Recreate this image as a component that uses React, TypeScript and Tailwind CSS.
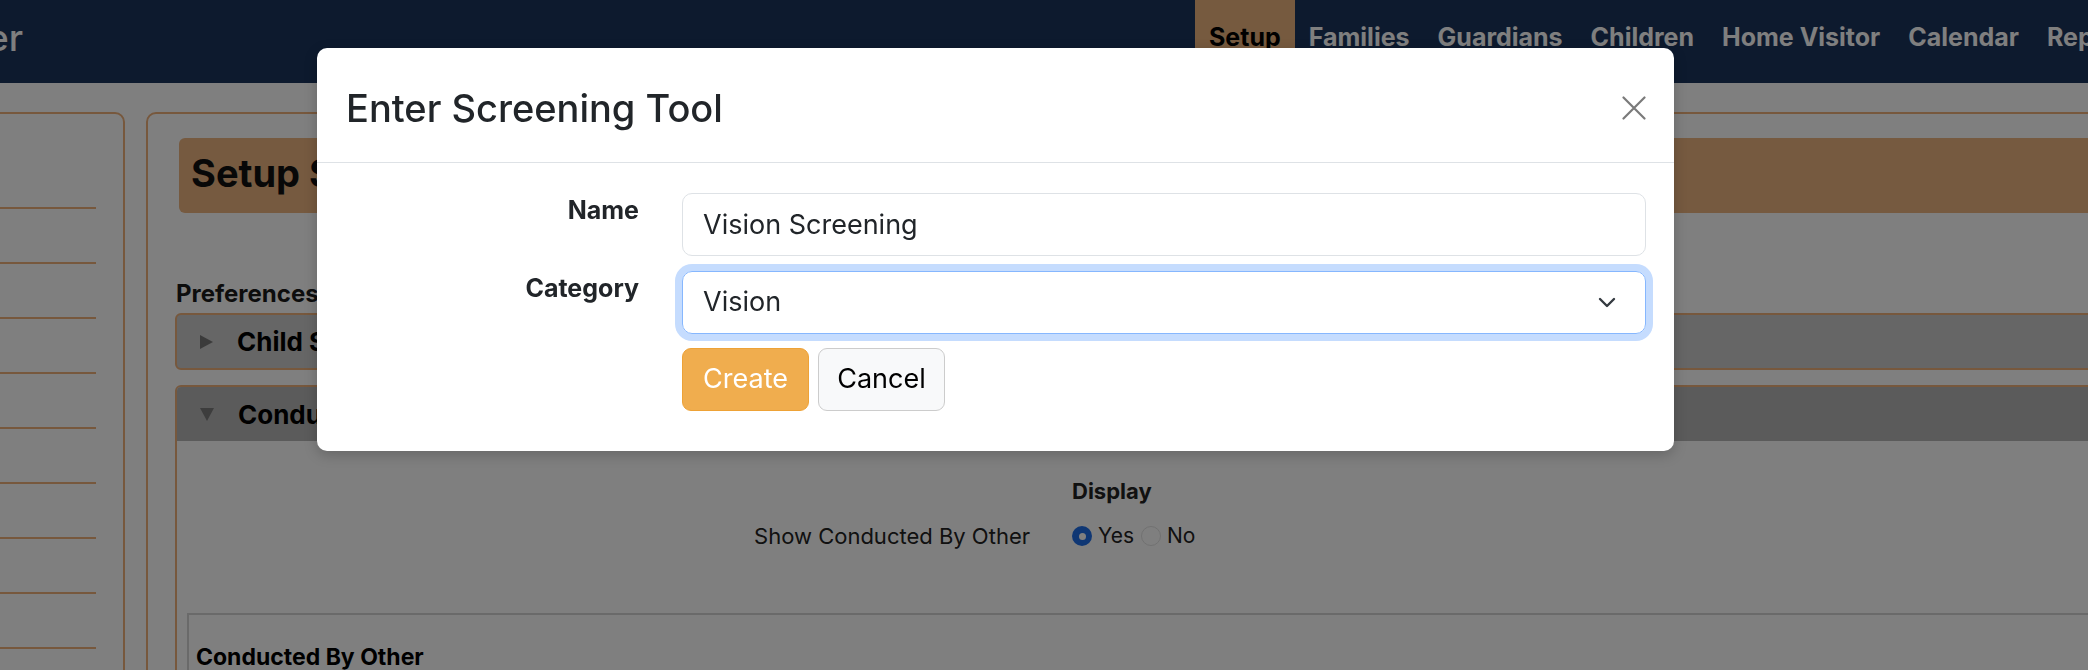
import { useState } from "react";

const navItems = ["Setup", "Families", "Guardians", "Children", "Home Visitor", "Calendar", "Reports"];

const Chevron = () => (
  <svg width="18" height="11" viewBox="0 0 18 11" fill="none">
    <path d="M2 2l7 7 7-7" stroke="#343a40" strokeWidth="2.4" strokeLinecap="round" strokeLinejoin="round" />
  </svg>
);

const CloseIcon = () => (
  <svg width="24" height="24" viewBox="0 0 24 24" fill="none">
    <path d="M1.5 1.5l21 21M22.5 1.5l-21 21" stroke="#7a7a7a" strokeWidth="2.2" strokeLinecap="round" />
  </svg>
);

const Radio = ({ checked }: { checked: boolean }) =>
  checked ? (
    <span className="w-[20px] h-[20px] rounded-full bg-[#1f6ee8] flex items-center justify-center">
      <span className="w-[7px] h-[7px] rounded-full bg-white" />
    </span>
  ) : (
    <span className="w-[20px] h-[20px] rounded-full bg-white border border-[#e2e2e2]" />
  );

const App = () => {
  const [name, setName] = useState("Vision Screening");
  const [category, setCategory] = useState("Vision");

  return (
    <div className="relative w-[2088px] h-[670px] overflow-hidden bg-white font-[Inter,'Noto_Sans',sans-serif] text-[#212529]">
      {/* navbar */}
      <div className="h-[83px] bg-[#1b345c] flex">
        <div className="w-[1195px] shrink-0 pt-[16px] overflow-hidden">
          <span className="block -ml-[13px] text-[37px] leading-[44px] font-medium text-white">er</span>
        </div>
        {navItems.map(item => (
          <div
            key={item}
            className={`h-full px-[14px] pt-[21px] text-[25px] leading-[32px] font-bold whitespace-nowrap ${
              item === "Setup" ? "bg-[#ecb47f] text-black" : "text-white"
            }`}
          >
            {item}
          </div>
        ))}
      </div>

      {/* page body */}
      <div className="flex pt-[29px]">
        <div className="-ml-[75px] w-[200px] shrink-0 h-[700px] border-2 border-[#eeb07a] rounded-[10px] pt-[40px] px-[27px]">
          {Array.from({ length: 10 }).map((_, i) => (
            <div key={i} className="h-[55px] border-b-2 border-[#eeb07a]" />
          ))}
        </div>

        <div className="ml-[21px] w-[2000px] shrink-0 h-[700px] border-2 border-[#eeb07a] rounded-[10px] pt-[24px]">
          <div className="ml-[31px] h-[75px] bg-[#ecb480] rounded-[6px] pl-[12px] pt-[12px]">
            <h1 className="text-[38px] leading-[46px] font-bold text-[#111]">Setup Screening Tools</h1>
          </div>

          <div className="ml-[27px] mt-[65px]">
            <div className="pl-[1px] text-[24px] leading-[32px] font-bold text-[#1a1a1a]">Preferences</div>

            <div className="mt-[3px] h-[57px] bg-[#cccccc] border-2 border-[#eeb07a] rounded-[6px] flex items-center pl-[23px]">
              <span className="w-0 h-0 border-y-[7px] border-y-transparent border-l-[13px] border-l-[#777]" />
              <span className="ml-[24px] text-[26px] font-bold text-black">Child Screening Tools</span>
            </div>

            <div className="mt-[15px] border-2 border-[#eeb07a] rounded-[6px] h-[400px]">
              <div className="h-[54px] bg-[#b7b7b7] flex items-center pl-[23px] rounded-t-[4px]">
                <span className="w-0 h-0 border-x-[7px] border-x-transparent border-t-[13px] border-t-[#7a7a7a]" />
                <span className="ml-[24px] text-[26px] font-bold text-black">Conducted By Other</span>
              </div>

              <div className="pt-[35px] pl-[10px]">
                <div className="flex gap-[42px]">
                  <div className="w-[843px]" />
                  <div className="text-[22px] leading-[30px] font-bold text-[#222]">Display</div>
                </div>
                <div className="mt-[15px] flex items-center gap-[42px]">
                  <div className="w-[843px] text-right text-[22px] leading-[30px] text-[#222]">Show Conducted By Other</div>
                  <div className="flex items-center text-[21px] leading-[30px] text-[#222]">
                    <Radio checked />
                    <span className="ml-[6px]">Yes</span>
                    <span className="ml-[7px] flex">
                      <Radio checked={false} />
                    </span>
                    <span className="ml-[6px]">No</span>
                  </div>
                </div>

                <div className="mt-[62px] border-2 border-[#d4d4d4] h-[200px] pl-[7px] pt-[27px]">
                  <div className="text-[23px] leading-[30px] font-bold text-black">Conducted By Other</div>
                </div>
              </div>
            </div>
          </div>
        </div>
      </div>

      {/* backdrop */}
      <div className="fixed inset-0 bg-black/50" />

      {/* modal */}
      <div className="absolute left-[317px] top-[48px] w-[1357px] h-[403px] bg-white rounded-[10px] shadow-[0_4px_14px_rgba(0,0,0,0.2)] z-10">
        <div className="h-[115px] px-[28px] pt-[6px] flex items-center justify-between border-b-[1.5px] border-[#dee2e6]">
          <h2 className="text-[38px] leading-[48px] font-medium text-[#212529] pl-[1px]">Enter Screening Tool</h2>
          <button type="button" className="w-[24px] h-[24px] flex items-center justify-center">
            <CloseIcon />
          </button>
        </div>

        <form className="pt-[30px] px-[28px] pb-[41px]" onSubmit={e => e.preventDefault()}>
          <div className="flex items-start gap-[43px]">
            <label className="w-[294px] shrink-0 text-right text-[25px] leading-[34px] font-bold text-[#212529]">Name</label>
            <input
              value={name}
              onChange={e => setName(e.target.value)}
              className="flex-1 h-[63px] px-[20px] border-[1.5px] border-[#dee2e6] rounded-[10px] text-[27px] text-[#212529] outline-none"
            />
          </div>

          <div className="mt-[15px] flex items-start gap-[43px]">
            <label className="w-[294px] shrink-0 text-right text-[25px] leading-[34px] font-bold text-[#212529]">Category</label>
            <div className="relative flex-1 h-[63px] border-[1.5px] border-[#86b7fe] rounded-[10px] shadow-[0_0_0_7px_#c5dcfe] flex items-center pl-[20px] pr-[29px]">
              <select
                value={category}
                onChange={e => setCategory(e.target.value)}
                className="flex-1 appearance-none bg-transparent text-[27px] text-[#212529] outline-none"
              >
                <option>Vision</option>
                <option>Hearing</option>
                <option>Development</option>
              </select>
              <Chevron />
            </div>
          </div>

          <div className="mt-[14px] ml-[337px] flex gap-[9px]">
            <button type="submit" className="w-[127px] h-[63px] bg-[#f0ad4e] border-[1.5px] border-[#eea236] rounded-[9px] text-white text-[27px]">
              Create
            </button>
            <button type="button" className="w-[127px] h-[63px] bg-[#f8f9fa] border-[1.5px] border-[#cccccc] rounded-[9px] text-black text-[27px]">
              Cancel
            </button>
          </div>
        </form>
      </div>
    </div>
  );
};

export default App;
